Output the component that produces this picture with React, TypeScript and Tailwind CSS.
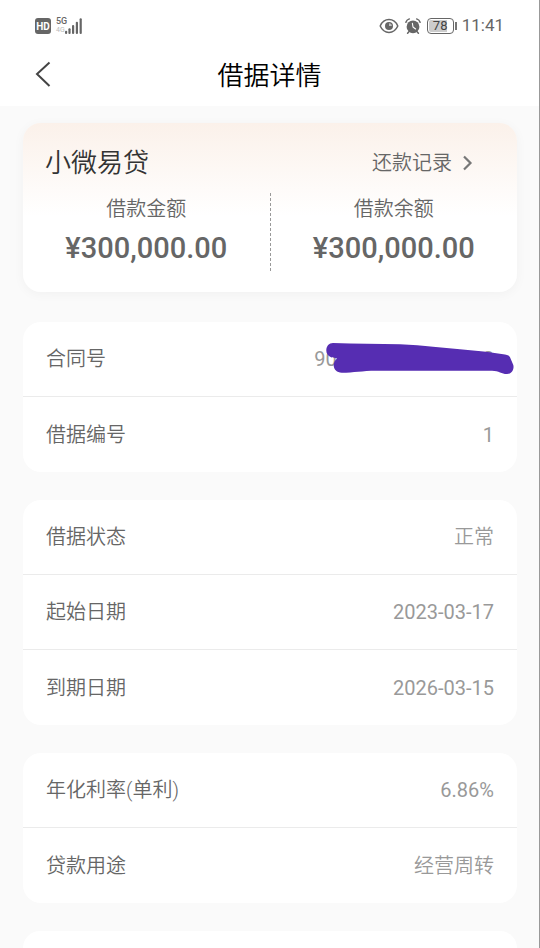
import type { ReactNode } from "react";
import { clsx } from "clsx";

interface DetailItem {
  label: string;
  value: string;
  masked?: boolean;
}

const DETAIL_GROUPS: DetailItem[][] = [
  [
    { label: "合同号", value: "9000000000000000", masked: true },
    { label: "借据编号", value: "1" },
  ],
  [
    { label: "借据状态", value: "正常" },
    { label: "起始日期", value: "2023-03-17" },
    { label: "到期日期", value: "2026-03-15" },
  ],
  [
    { label: "年化利率(单利)", value: "6.86%" },
    { label: "贷款用途", value: "经营周转" },
  ],
];

function SignalIcon() {
  return (
    <svg width="17" height="16" viewBox="0 0 17 16" fill="#666" aria-hidden="true">
      <rect x="0" y="12.8" width="2.2" height="3.2" rx="1" />
      <rect x="3.4" y="10.2" width="2.2" height="5.8" rx="1" />
      <rect x="7" y="7" width="2.2" height="9" rx="1" />
      <rect x="10.8" y="3.8" width="2.2" height="12.2" rx="1" />
      <rect x="14.6" y="0.3" width="2.2" height="15.7" rx="1" />
    </svg>
  );
}

function EyeIcon() {
  return (
    <svg width="20" height="16" viewBox="0 0 20 16" fill="none" aria-hidden="true">
      <path
        d="M1.2 8C3 4 6 1.6 10 1.6S17 4 18.8 8C17 12 14 14.4 10 14.4S3 12 1.2 8Z"
        stroke="#666"
        strokeWidth="1.5"
        strokeLinejoin="round"
      />
      <circle cx="10" cy="8" r="4" fill="#666" />
      <path d="M10 8V5.2A2.8 2.8 0 0 1 12.8 8Z" fill="#fff" opacity="0.6" />
    </svg>
  );
}

function AlarmIcon() {
  return (
    <svg width="16" height="16" viewBox="0 0 16 16" fill="none" aria-hidden="true">
      <circle cx="8" cy="8.8" r="6.4" fill="#666" />
      <path
        d="M0.9 4.2C1.4 2.6 2.6 1.4 4.3 0.9M15.1 4.2C14.6 2.6 13.4 1.4 11.7 0.9M3.7 13.9L2.6 15.2M12.3 13.9L13.4 15.2"
        stroke="#666"
        strokeWidth="1.5"
        strokeLinecap="round"
      />
      <path
        d="M7.4 5.4L8 9L10.6 11"
        stroke="#fff"
        strokeWidth="1.1"
        strokeLinecap="round"
        strokeLinejoin="round"
      />
    </svg>
  );
}

function StatusBar() {
  return (
    <div className="flex h-[52px] items-center justify-between px-[35px] text-[#666]">
      <div className="flex items-center">
        <span className="flex h-4 w-4 items-center justify-center rounded-[3px] bg-[#666] text-[10px] font-bold text-white">
          HD
        </span>
        <span className="ml-[5px] flex w-[9px] flex-col items-start text-[9px] leading-[9px] font-medium">
          <span>5G</span>
          <span className="text-[7px] font-normal text-[#bbb]">4G</span>
        </span>
        <SignalIcon />
      </div>
      <div className="flex items-center">
        <EyeIcon />
        <span className="ml-[6px]">
          <AlarmIcon />
        </span>
        <span className="ml-[6px] flex h-4 w-[27px] rounded-[4px] border border-[#666] p-px">
          <span className="flex flex-1 items-center justify-center rounded-[2px] bg-linear-to-r from-[#ccc] from-78% to-white to-78% text-[13px] text-[#444]">
            78
          </span>
        </span>
        <span className="ml-px h-2 w-[2px] bg-[#777]" />
        <time className="ml-[5px] text-[17px]">11:41</time>
      </div>
    </div>
  );
}

function NavBar() {
  return (
    <header className="grid h-[54px] grid-cols-[1fr_auto_1fr] items-start px-[35px]">
      <button type="button" aria-label="返回" className="mt-[9px] w-4">
        <svg width="16" height="26" viewBox="0 0 16 26" fill="none" aria-hidden="true">
          <path d="M14.5 1.5L2 13L14.5 25" stroke="#444" strokeWidth="2" />
        </svg>
      </button>
      <h1 className="text-[26px] leading-[48px] font-[350] text-black">借据详情</h1>
    </header>
  );
}

function Amount({ label, value }: { label: string; value: string }) {
  return (
    <div className="flex-1 text-center text-[#666]">
      <p className="text-xl leading-8 font-[350]">{label}</p>
      <p className="text-[29px] leading-[46px] font-medium">{value}</p>
    </div>
  );
}

function SummaryCard() {
  return (
    <section className="rounded-[18px] bg-linear-to-b from-[#fbf1ea] to-white to-55% pt-5 pb-[21px] shadow-[0_2px_12px_rgba(0,0,0,0.04)]">
      <div className="flex items-center justify-between pr-11 pl-[22px]">
        <h2 className="text-[26px] leading-10 font-[350] text-[#333]">小微易贷</h2>
        <a href="#records" className="flex items-center gap-[10px] text-xl font-[350] text-[#666]">
          还款记录
          <svg width="11" height="16" viewBox="0 0 11 16" fill="none" aria-hidden="true">
            <path d="M2 1.5L8.5 8L2 14.5" stroke="#777" strokeWidth="2.2" />
          </svg>
        </a>
      </div>
      <div className="mt-[10px] flex">
        <Amount label="借款金额" value="¥300,000.00" />
        <div className="border-l border-dashed border-[#999]" />
        <Amount label="借款余额" value="¥300,000.00" />
      </div>
    </section>
  );
}

function MaskStroke() {
  return (
    <svg
      className="absolute top-5 right-[3px]"
      width="188"
      height="33"
      viewBox="0 0 188 33"
      fill="#562db2"
      aria-hidden="true"
    >
      <path d="M0.3 8.7C0.3 4 3 1 7 1C30 1.8 52 2 74 2.3C86 2.8 97 3.6 107 4.7L134 7.2L160 9.8L179 12.4C182 12.8 183.4 13.6 184 15.3L187.3 23C188.5 28 185 32 181 32C176 32.2 173 28.7 166 28.7H50C36 28.7 28 30.7 15.7 30.7C11 30.7 7.7 27.5 7.7 23.3C7.7 20.5 9 18.3 11 16.5C9 15.6 7 16 5 15.2C2 14 0.3 11.5 0.3 8.7Z" />
    </svg>
  );
}

function DetailCard({ children }: { children: ReactNode }) {
  return <dl className="divide-y divide-[#ebebeb] rounded-[18px] bg-white">{children}</dl>;
}

function DetailRow({ label, value, masked }: DetailItem) {
  // Chinese text is set a little lighter than the digits
  const isChinese = /[\u4e00-\u9fff]/.test(value);

  return (
    <div className="relative flex h-[75px] items-center justify-between px-[23px] text-xl">
      <dt className="font-[350] text-[#666]">{label}</dt>
      <dd className={clsx("text-[#999]", isChinese && "font-[350]")}>{value}</dd>
      {masked && <MaskStroke />}
    </div>
  );
}

export default function App() {
  return (
    <div className="flex min-h-screen flex-col border-r border-[#999] bg-[#fafafa] font-['Roboto','Noto_Sans_CJK_SC',sans-serif]">
      <div className="bg-white">
        <StatusBar />
        <NavBar />
      </div>
      <main className="flex flex-1 flex-col pt-[17px] pr-[22px] pl-[23px]">
        <SummaryCard />
        <div className="mt-[30px] flex flex-1 flex-col gap-7">
          {DETAIL_GROUPS.map((group) => (
            <DetailCard key={group[0].label}>
              {group.map((item) => (
                <DetailRow key={item.label} {...item} />
              ))}
            </DetailCard>
          ))}
          <div className="flex-1 rounded-t-[18px] bg-white" />
        </div>
      </main>
    </div>
  );
}
